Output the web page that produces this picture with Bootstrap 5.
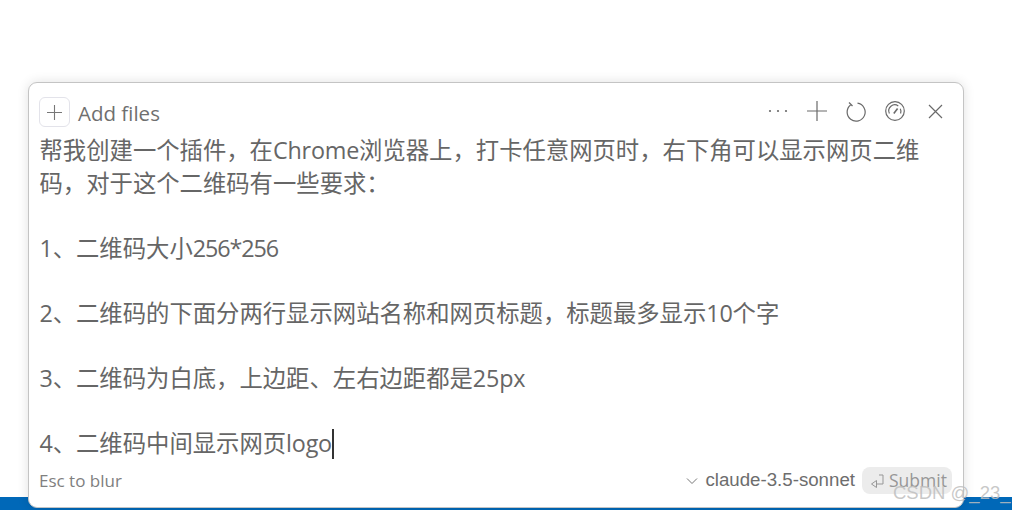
<!DOCTYPE html>
<html lang="zh">
<head>
<meta charset="utf-8">
<title>Composer</title>
<link href="https://cdn.jsdelivr.net/npm/bootstrap@5.3.0/dist/css/bootstrap.min.css" rel="stylesheet">
<style>
html,body{height:100%;margin:0;overflow:hidden;background:#fff}
.stage{height:510px;padding-top:82px;background:linear-gradient(#fff 497px,#0068b8 497px);position:relative;font-family:"Segoe UI","Open Sans","Noto Sans CJK SC",sans-serif}
.composer{width:936px;height:426px;margin-left:28px;background:#fff;border:1px solid #c4c4c4;border-radius:9px;box-shadow:0 0 12px rgba(0,0,0,.12);padding:14px 10px 0 10px}
.topbar{height:30px}
.addbox{width:31px;height:30px;border:1px solid #e3e3ea;border-radius:6px;color:#777}
.addlabel{font-size:20.5px;color:#6f6f6f;margin-left:8px;padding-top:2px}
.iconset{color:#6a6a6a;margin-right:10px;gap:19px;margin-bottom:2px}
.iconset .closer{margin-left:4px}
.msg{font-family:"Noto Sans CJK SC",sans-serif;font-size:23.35px;line-height:32.6px;color:#666;white-space:pre-wrap;height:326px;margin-top:6px;padding-left:.5px}
.msg .latin{font-family:"Open Sans",sans-serif;letter-spacing:-.2px;line-height:0}
.msg .tight{letter-spacing:-1.1px}
.caret-mark{display:inline-block;width:2px;height:30px;background:#333;vertical-align:-7px;line-height:0}
.footer-row{margin-top:8px;height:27px}
.hint{font-size:17px;color:#808080}
.model{font-family:"Liberation Sans",sans-serif;font-size:18.7px;color:#6d6d6d;margin-left:7px}
.submit{background:#ececec;color:#979797;border-radius:8px;font-size:17.5px;height:27px;width:90px;padding-left:8px;margin-left:7px;gap:4px;font-family:"Open Sans",sans-serif;margin-right:1px}
.mark-csdn{position:absolute;left:893px;top:479px;font-family:"Liberation Sans",sans-serif;font-size:18.5px;color:rgba(190,190,190,.85);white-space:nowrap}
</style>
</head>
<body>
<div class="stage">
  <div class="composer d-flex flex-column">
    <div class="topbar d-flex align-items-center justify-content-between">
      <div class="d-flex align-items-center">
        <span class="addbox d-flex align-items-center justify-content-center">
          <svg width="17" height="17" viewBox="0 0 17 17" fill="none" stroke="currentColor" stroke-width="1.1"><path d="M8.5 1v15M1 8.5h15"/></svg>
        </span>
        <span class="addlabel">Add files</span>
      </div>
      <div class="iconset d-flex align-items-center">
        <svg width="20" height="20" viewBox="0 0 20 20" fill="#6a6a6a"><circle cx="2" cy="10" r="1.1"/><circle cx="10" cy="10" r="1.1"/><circle cx="18" cy="10" r="1.1"/></svg>
        <svg width="20" height="20" viewBox="0 0 20 20" fill="none" stroke="currentColor" stroke-width="1.2"><path d="M10 0v20M0 10h20"/></svg>
        <svg width="20" height="22" viewBox="0 0 20 22" fill="none" stroke="currentColor" stroke-width="1.2"><path d="M4.6 5A9 9 0 1 0 11.5 3.2"/><path d="M3 2.5l3.5 3.5"/></svg>
        <svg width="20" height="20" viewBox="0 0 20 20" fill="none" stroke="currentColor" stroke-width="1.2"><circle cx="10" cy="10" r="9.3"/><path d="M4.4 12.5A6 6 0 0 1 13.3 5M15.3 7.8a6 6 0 0 1 .3 4.7"/><path d="M8.8 12.5l3.8-5" stroke-width="1.6"/></svg>
        <svg class="closer" width="15" height="15" viewBox="0 0 15 15" fill="none" stroke="currentColor" stroke-width="1.2"><path d="M1 1l13 13M14 1L1 14"/></svg>
      </div>
    </div>
    <div class="msg">帮我创建一个插件，在<span class="latin">Chrome</span>浏览器上，打卡任意网页时，右下角可以显示网页二维
码，对于这个二维码有一些要求：

<span class="latin">1</span>、二维码大小<span class="latin tight">256*256</span>

<span class="latin">2</span>、二维码的下面分两行显示网站名称和网页标题，标题最多显示<span class="latin">10</span>个字

<span class="latin">3</span>、二维码为白底，上边距、左右边距都是<span class="latin">25px</span>

<span class="latin">4</span>、二维码中间显示网页<span class="latin">logo</span><span class="caret-mark"></span></div>
    <div class="footer-row d-flex align-items-center justify-content-between">
      <span class="hint">Esc to blur</span>
      <div class="d-flex align-items-center">
        <svg width="12" height="8" viewBox="0 0 12 8" fill="none" stroke="#777" stroke-width="1"><path d="M1 1.5l5 5 5-5"/></svg>
        <span class="model">claude-3.5-sonnet</span>
        <span class="submit d-flex align-items-center">
          <svg width="15" height="14" viewBox="0 0 15 14" fill="none" stroke="currentColor" stroke-width="1"><path d="M9 1h4v9H6.5M6.5 6.5v7L1.5 10z"/></svg>
          Submit
        </span>
      </div>
    </div>
  </div>
  <div class="mark-csdn">CSDN @_23_</div>
</div>
<script src="https://cdn.jsdelivr.net/npm/bootstrap@5.3.0/dist/js/bootstrap.bundle.min.js"></script>
</body>
</html>
